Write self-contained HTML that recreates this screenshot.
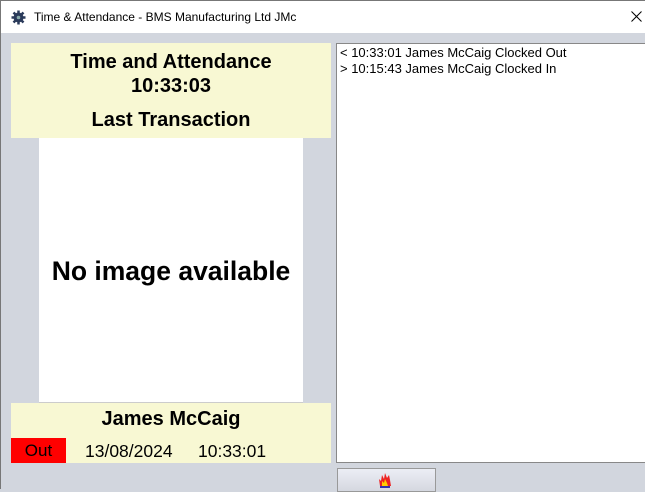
<!DOCTYPE html>
<html><head><meta charset="utf-8"><style>
*{margin:0;padding:0;box-sizing:border-box}
body{width:645px;height:489px;overflow:hidden;background:#d2d6de;font-family:"Liberation Sans",sans-serif;position:relative}
.tb{position:absolute;left:0;top:0;width:645px;height:33px;background:#fff;border-top:1px solid #777;border-left:1px solid #777}
.tb .t{position:absolute;left:33px;top:9px;font-size:12px;color:#000}
.y{position:absolute;background:#f8f8d3;text-align:center;font-weight:bold;color:#000}
.img{position:absolute;left:39px;top:138px;width:264px;height:265px;background:#fff;border-bottom:1px solid #ccc}
.img div{position:absolute;left:0;right:0;top:118px;text-align:center;font-weight:bold;font-size:26.5px}
.list{position:absolute;left:336px;top:43px;width:312px;height:420px;background:#fff;border:1px solid #888;font-size:13px;padding:1px 0 0 3px;line-height:16px}
.btn{position:absolute;left:337px;top:468px;width:99px;height:24px;border:1px solid #999;background:linear-gradient(#eceef5,#d5d8e0)}
</style></head><body>
<div class="tb"><svg style="position:absolute;left:10px;top:9px" width="15" height="15" viewBox="0 0 15 15"><circle cx="7.5" cy="7.5" r="5" fill="#2a3a5a"/><g stroke="#2a3a5a" stroke-width="2.5"><line x1="7.5" y1="0.5" x2="7.5" y2="14.5"/><line x1="0.5" y1="7.5" x2="14.5" y2="7.5"/><line x1="2.5" y1="2.5" x2="12.5" y2="12.5"/><line x1="12.5" y1="2.5" x2="2.5" y2="12.5"/></g><circle cx="7.5" cy="7.5" r="1.8" fill="#8aa"/></svg><span class="t">Time &amp; Attendance - BMS Manufacturing Ltd JMc</span>
<svg style="position:absolute;left:630px;top:10px" width="11" height="11" viewBox="0 0 11 11"><path d="M0.5 0.5L10.5 10.5M10.5 0.5L0.5 10.5" stroke="#000" stroke-width="1"/></svg></div>
<div style="position:absolute;left:0;top:33px;width:1px;height:456px;background:#777"></div>
<div class="y" style="left:11px;top:43px;width:320px;height:95px;font-size:20px">
<div style="position:absolute;left:0;right:0;top:7px;line-height:24px">Time and Attendance<br>10:33:03</div>
<div style="position:absolute;left:0;right:0;top:66px">Last Transaction</div></div>
<div class="img"><div>No image available</div></div>
<div class="y" style="left:11px;top:403px;width:320px;height:60px">
<div style="position:absolute;left:0;right:0;top:5px;font-size:20px">James McCaig</div>
<div style="position:absolute;left:0;top:35px;width:55px;height:25px;background:#f00;font-weight:normal;font-size:17px;line-height:25px">Out</div>
<div style="position:absolute;left:74px;top:38px;font-size:17.5px;font-weight:normal">13/08/2024</div>
<div style="position:absolute;left:187px;top:38px;font-size:17.5px;font-weight:normal">10:33:01</div></div>
<div class="list">&lt; 10:33:01 James McCaig Clocked Out<br>&gt; 10:15:43 James McCaig Clocked In</div>
<div class="btn"><svg style="position:absolute;left:40px;top:3px" width="14" height="16" viewBox="0 0 14 16"><path d="M2 14 L1 7 L3 9 L4 3 L6 7 L7 1 L9 6 L11 3 L12 8 L13 14Z" fill="#e22"/><path d="M4 14 L4 9 L6 11 L7 7 L9 11 L10 14Z" fill="#fc0"/><rect x="2" y="14" width="10" height="2" fill="#33a"/></svg></div>
</body></html>
